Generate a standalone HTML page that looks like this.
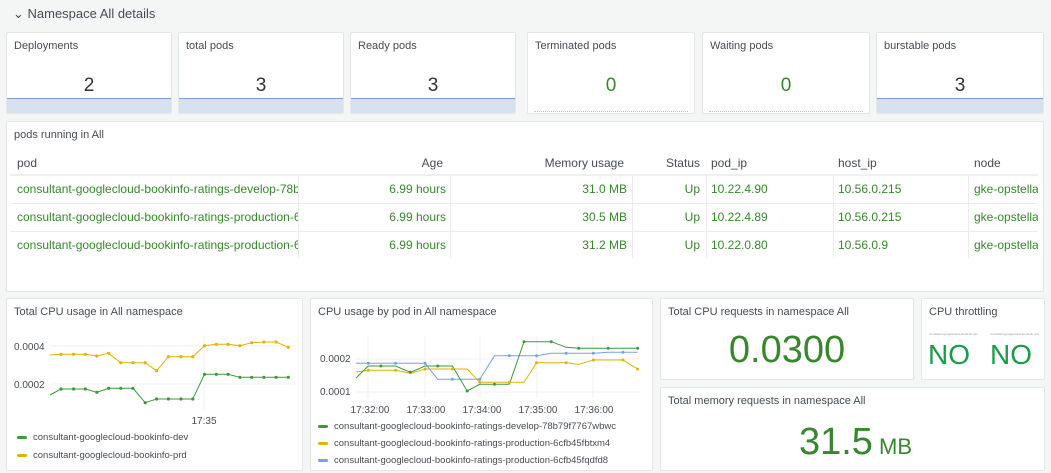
<!DOCTYPE html>
<html><head><meta charset="utf-8"><style>
*{margin:0;padding:0;box-sizing:border-box}
body{width:1051px;height:473px;background:#f4f5f5;font-family:"Liberation Sans",sans-serif;color:#464c54;position:relative;overflow:hidden}
.p{position:absolute;background:#fff;border:1px solid #e4e7e7;border-radius:2px;overflow:hidden}
.t{position:absolute;left:7px;top:7px;font-size:11px;color:#464c54;white-space:nowrap}
.v{position:absolute;left:0;right:0;text-align:center;font-size:19px;color:#333}
.g{color:#37872d}
.spark{position:absolute;left:0;right:0;bottom:0;height:15px;background:#d6e2f0;border-top:1px dotted #6f8fc9}
.spark:before{content:"";position:absolute;left:0;right:0;top:-1px;border-top:1px solid #7b9bd1}
.gs{position:absolute;left:6px;right:6px;bottom:1px;border-top:1px dotted #a6d6a4}
.cell{position:absolute;font-size:12px;white-space:nowrap;color:#37872d}
.h{color:#464c54}
.r{text-align:right}
.line{position:absolute;height:1px;background:#ececec}
.leg{position:absolute;font-size:9px;color:#464c54;white-space:nowrap}
.leg i{display:inline-block;width:10px;height:3px;border-radius:2px;margin-right:6px;vertical-align:middle}
</style></head><body>
<div style="position:absolute;left:13px;top:6px;font-size:13px;color:#464c54">⌄ Namespace All details</div>

<div class="p" style="left:6px;top:32px;width:166px;height:82px"><div class="t">Deployments</div><div class="v" style="top:42px">2</div><div class="spark"></div></div>
<div class="p" style="left:178px;top:32px;width:166px;height:82px"><div class="t">total pods</div><div class="v" style="top:42px">3</div><div class="spark"></div></div>
<div class="p" style="left:350px;top:32px;width:166px;height:82px"><div class="t">Ready pods</div><div class="v" style="top:42px">3</div><div class="spark"></div></div>
<div class="p" style="left:527px;top:32px;width:168px;height:82px"><div class="t">Terminated pods</div><div class="v g" style="top:42px">0</div><div class="gs"></div></div>
<div class="p" style="left:702px;top:32px;width:168px;height:82px"><div class="t">Waiting pods</div><div class="v g" style="top:42px">0</div><div class="gs"></div></div>
<div class="p" style="left:876px;top:32px;width:168px;height:82px"><div class="t">burstable pods</div><div class="v" style="top:42px">3</div><div class="spark"></div></div>

<div class="p" style="left:6px;top:121px;width:1038px;height:171px">
<div class="t" style="top:7px">pods running in All</div>
</div>
<div class="line" style="left:10px;top:174px;width:1028px;height:2px;background:#efefef"></div>
<div class="line" style="left:10px;top:203px;width:1028px"></div>
<div class="line" style="left:10px;top:231px;width:1028px"></div>
<div style="position:absolute;left:298px;top:176px;width:1px;height:82px;background:#ececec"></div>
<div style="position:absolute;left:450px;top:176px;width:1px;height:82px;background:#ececec"></div>
<div style="position:absolute;left:632px;top:176px;width:1px;height:82px;background:#ececec"></div>
<div style="position:absolute;left:706px;top:176px;width:1px;height:82px;background:#ececec"></div>
<div style="position:absolute;left:833px;top:176px;width:1px;height:82px;background:#ececec"></div>
<div style="position:absolute;left:968px;top:176px;width:1px;height:82px;background:#ececec"></div>
<div class="cell h" style="left:17px;top:156px">pod</div>
<div class="cell h r" style="left:380px;width:63px;top:156px">Age</div>
<div class="cell h r" style="left:500px;width:124px;top:156px">Memory usage</div>
<div class="cell h r" style="left:640px;width:60px;top:156px">Status</div>
<div class="cell h" style="left:711px;top:156px">pod_ip</div>
<div class="cell h" style="left:838px;top:156px">host_ip</div>
<div class="cell h" style="left:974px;top:156px">node</div>

<div class="cell" style="left:17px;top:182px;width:281px;overflow:hidden">consultant-googlecloud-bookinfo-ratings-develop-78b79f7767</div>
<div class="cell r" style="left:380px;width:66px;top:182px">6.99 hours</div>
<div class="cell r" style="left:500px;width:127px;top:182px">31.0 MB</div>
<div class="cell r" style="left:640px;width:60px;top:182px">Up</div>
<div class="cell" style="left:711px;top:182px">10.22.4.90</div>
<div class="cell" style="left:838px;top:182px">10.56.0.215</div>
<div class="cell" style="left:974px;top:182px;width:64px;overflow:hidden">gke-opstella</div>

<div class="cell" style="left:17px;top:210px;width:281px;overflow:hidden">consultant-googlecloud-bookinfo-ratings-production-6cfb</div>
<div class="cell r" style="left:380px;width:66px;top:210px">6.99 hours</div>
<div class="cell r" style="left:500px;width:127px;top:210px">30.5 MB</div>
<div class="cell r" style="left:640px;width:60px;top:210px">Up</div>
<div class="cell" style="left:711px;top:210px">10.22.4.89</div>
<div class="cell" style="left:838px;top:210px">10.56.0.215</div>
<div class="cell" style="left:974px;top:210px;width:64px;overflow:hidden">gke-opstella</div>

<div class="cell" style="left:17px;top:238px;width:281px;overflow:hidden">consultant-googlecloud-bookinfo-ratings-production-6cfb</div>
<div class="cell r" style="left:380px;width:66px;top:238px">6.99 hours</div>
<div class="cell r" style="left:500px;width:127px;top:238px">31.2 MB</div>
<div class="cell r" style="left:640px;width:60px;top:238px">Up</div>
<div class="cell" style="left:711px;top:238px">10.22.0.80</div>
<div class="cell" style="left:838px;top:238px">10.56.0.9</div>
<div class="cell" style="left:974px;top:238px;width:64px;overflow:hidden">gke-opstella</div>

<div class="p" style="left:6px;top:298px;width:297px;height:173px"><div class="t">Total CPU usage in All namespace</div></div>
<div class="p" style="left:310px;top:298px;width:343px;height:173px"><div class="t">CPU usage by pod in All namespace</div></div>
<div class="p" style="left:660px;top:298px;width:254px;height:82px"><div class="t">Total CPU requests in namespace All</div><div class="v g" style="top:30px;font-size:38px">0.0300</div></div>
<div class="p" style="left:921px;top:298px;width:124px;height:82px"><div class="t">CPU throttling</div>
<div style="position:absolute;left:7px;top:33px;font-size:3px;color:#999">consultant-googlecloud-bookinfo-dev</div>
<div style="position:absolute;left:68px;top:33px;font-size:3px;color:#999">consultant-googlecloud-bookinfo-prd</div>
<div style="position:absolute;left:6px;top:40px;font-size:28px;color:#1a9c48">NO</div>
<div style="position:absolute;left:68px;top:40px;font-size:28px;color:#1a9c48">NO</div></div>
<div class="p" style="left:660px;top:387px;width:385px;height:84px"><div class="t">Total memory requests in namespace All</div><div class="v g" style="top:33px;font-size:38px;padding-left:6px">31.5<span style="font-size:22px"> MB</span></div></div>

<svg style="position:absolute;left:0;top:0" width="1051" height="473" viewBox="0 0 1051 473">
<g font-family="Liberation Sans" font-size="10" fill="#464c54">
<line x1="50" y1="346" x2="295" y2="346" stroke="#f0f0f0"/><line x1="50" y1="384" x2="295" y2="384" stroke="#f0f0f0"/>
<line x1="204" y1="335" x2="204" y2="410" stroke="#f0f0f0"/>
<text x="14" y="350">0.0004</text><text x="14" y="388">0.0002</text><text x="204" y="424" text-anchor="middle">17:35</text>
<polyline fill="none" stroke="#e0b400" stroke-width="1" points="50,355 61,354.3 73.6,354.3 85.4,354.3 96.8,356 108.6,353.3 120.8,362.7 133,362.7 145.2,362.7 156.6,370.7 168.4,356.7 181,356.7 192.8,356.7 204.5,345.7 216.3,344.3 228.1,344.3 239.9,345.7 251.7,342.7 263.9,342 276.1,342 288.3,347.3"/>
<polyline fill="none" stroke="#3d9a3a" stroke-width="1" points="50,395 61,389 73.6,389 85.4,389 96.8,392.3 108.6,388.3 120.8,388.3 133,388.3 145.2,402.7 156.6,399 168.4,399 181,399 192.8,399 204.5,374.3 216.3,374.3 228.1,374.3 239.9,377.3 251.7,377.3 263.9,377.3 276.1,377.3 288.3,377.3"/>
<g fill="#e0b400"><circle cx="61" cy="354.3" r="1.6"/><circle cx="73.6" cy="354.3" r="1.6"/><circle cx="85.4" cy="354.3" r="1.6"/><circle cx="96.8" cy="356" r="1.6"/><circle cx="108.6" cy="353.3" r="1.6"/><circle cx="120.8" cy="362.7" r="1.6"/><circle cx="133" cy="362.7" r="1.6"/><circle cx="145.2" cy="362.7" r="1.6"/><circle cx="156.6" cy="370.7" r="1.6"/><circle cx="168.4" cy="356.7" r="1.6"/><circle cx="181" cy="356.7" r="1.6"/><circle cx="192.8" cy="356.7" r="1.6"/><circle cx="204.5" cy="345.7" r="1.6"/><circle cx="216.3" cy="344.3" r="1.6"/><circle cx="228.1" cy="344.3" r="1.6"/><circle cx="239.9" cy="345.7" r="1.6"/><circle cx="251.7" cy="342.7" r="1.6"/><circle cx="263.9" cy="342" r="1.6"/><circle cx="276.1" cy="342" r="1.6"/><circle cx="288.3" cy="347.3" r="1.6"/></g>
<g fill="#3d9a3a"><circle cx="61" cy="389" r="1.6"/><circle cx="73.6" cy="389" r="1.6"/><circle cx="85.4" cy="389" r="1.6"/><circle cx="96.8" cy="392.3" r="1.6"/><circle cx="108.6" cy="388.3" r="1.6"/><circle cx="120.8" cy="388.3" r="1.6"/><circle cx="133" cy="388.3" r="1.6"/><circle cx="145.2" cy="402.7" r="1.6"/><circle cx="156.6" cy="399" r="1.6"/><circle cx="168.4" cy="399" r="1.6"/><circle cx="181" cy="399" r="1.6"/><circle cx="192.8" cy="399" r="1.6"/><circle cx="204.5" cy="374.3" r="1.6"/><circle cx="216.3" cy="374.3" r="1.6"/><circle cx="228.1" cy="374.3" r="1.6"/><circle cx="239.9" cy="377.3" r="1.6"/><circle cx="251.7" cy="377.3" r="1.6"/><circle cx="263.9" cy="377.3" r="1.6"/><circle cx="276.1" cy="377.3" r="1.6"/><circle cx="288.3" cy="377.3" r="1.6"/></g>

<line x1="356" y1="359" x2="640" y2="359" stroke="#f0f0f0"/><line x1="356" y1="392" x2="640" y2="392" stroke="#f0f0f0"/>
<g stroke="#f0f0f0"><line x1="368" y1="336" x2="368" y2="398"/><line x1="425" y1="336" x2="425" y2="398"/><line x1="480" y1="336" x2="480" y2="398"/><line x1="537" y1="336" x2="537" y2="398"/><line x1="593" y1="336" x2="593" y2="398"/></g>
<text x="320" y="362" font-size="10">0.0002</text><text x="320" y="395" font-size="10">0.0001</text>
<g font-size="10" text-anchor="middle"><text x="370" y="413">17:32:00</text><text x="426" y="413">17:33:00</text><text x="482" y="413">17:34:00</text><text x="538" y="413">17:35:00</text><text x="594" y="413">17:36:00</text></g>
<polyline fill="none" stroke="#e0b400" points="356,372 368.3,370.3 380.9,370.3 395.6,370.3 410.4,373.3 425.1,369 437.7,369 452.4,369 467.2,369 479.8,382.3 494.5,382.3 509.3,382.3 524,382.3 536.6,362.7 551.3,362.7 566.1,362.7 578.7,364.3 593.4,360 608.2,360 622.9,360 637.6,369"/>
<polyline fill="none" stroke="#73a0f2" points="356,363.3 368.3,363.3 380.9,363.3 395.6,363.3 410.4,363.3 425.1,363.3 437.7,379.3 452.4,379.3 467.2,379.3 479.8,379.3 494.5,355.7 509.3,355.7 524,355.7 536.6,355.7 551.3,353.3 566.1,353.3 578.7,353.3 593.4,353.3 608.2,352.3 622.9,352.3 637.6,352.3"/>
<polyline fill="none" stroke="#3d9a3a" points="356,378 368.3,366 380.9,366 395.6,366 410.4,372.3 425.1,366 437.7,366 452.4,366 467.2,391 479.8,384.3 494.5,384.3 509.3,384.3 524,341.7 536.6,341.7 551.3,341.7 566.1,347.3 578.7,348.3 593.4,348.3 608.2,348.3 622.9,348.3 637.6,348.3"/>
<g fill="#e0b400"><circle cx="368.3" cy="370.3" r="1.5"/><circle cx="395.6" cy="370.3" r="1.5"/><circle cx="425.1" cy="369" r="1.5"/><circle cx="452.4" cy="369" r="1.5"/><circle cx="479.8" cy="382.3" r="1.5"/><circle cx="509.3" cy="382.3" r="1.5"/><circle cx="536.6" cy="362.7" r="1.5"/><circle cx="566.1" cy="362.7" r="1.5"/><circle cx="593.4" cy="360" r="1.5"/><circle cx="622.9" cy="360" r="1.5"/><circle cx="637.6" cy="369" r="1.5"/></g>
<g fill="#73a0f2"><circle cx="368.3" cy="363.3" r="1.5"/><circle cx="395.6" cy="363.3" r="1.5"/><circle cx="425.1" cy="363.3" r="1.5"/><circle cx="452.4" cy="379.3" r="1.5"/><circle cx="479.8" cy="379.3" r="1.5"/><circle cx="509.3" cy="355.7" r="1.5"/><circle cx="536.6" cy="355.7" r="1.5"/><circle cx="566.1" cy="353.3" r="1.5"/><circle cx="593.4" cy="353.3" r="1.5"/><circle cx="622.9" cy="352.3" r="1.5"/></g>
<g fill="#3d9a3a"><circle cx="380.9" cy="366" r="1.5"/><circle cx="410.4" cy="372.3" r="1.5"/><circle cx="437.7" cy="366" r="1.5"/><circle cx="467.2" cy="391" r="1.5"/><circle cx="494.5" cy="384.3" r="1.5"/><circle cx="524" cy="341.7" r="1.5"/><circle cx="551.3" cy="341.7" r="1.5"/><circle cx="578.7" cy="348.3" r="1.5"/><circle cx="608.2" cy="348.3" r="1.5"/><circle cx="637.6" cy="348.3" r="1.5"/></g>
</g>
</svg>

<div class="leg" style="left:17px;top:432px;font-size:9.5px"><i style="background:#3d9a3a"></i>consultant-googlecloud-bookinfo-dev</div>
<div class="leg" style="left:17px;top:450px;font-size:9.5px"><i style="background:#e0b400"></i>consultant-googlecloud-bookinfo-prd</div>
<div style="position:absolute;left:318px;top:418px;width:330px;height:51px;overflow:hidden">
<div class="leg" style="left:0;top:3px;font-size:9.5px"><i style="background:#3d9a3a"></i>consultant-googlecloud-bookinfo-ratings-develop-78b79f7767wbwc</div>
<div class="leg" style="left:0;top:20px;font-size:9.5px"><i style="background:#e0b400"></i>consultant-googlecloud-bookinfo-ratings-production-6cfb45fbtxm4</div>
<div class="leg" style="left:0;top:37px;font-size:9.5px"><i style="background:#73a0f2"></i>consultant-googlecloud-bookinfo-ratings-production-6cfb45fqdfd8</div>
</div>
</body></html>
